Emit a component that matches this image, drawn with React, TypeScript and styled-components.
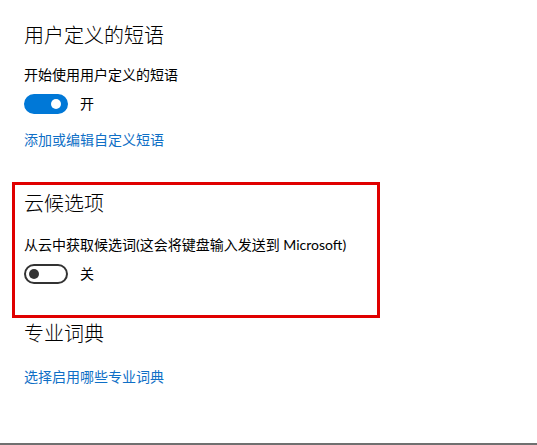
import React from "react";
import styled, { createGlobalStyle } from "styled-components";

const Global = createGlobalStyle`
  html, body { margin: 0; padding: 0; background: #fff; }
  body { font-family: "Lato", "Noto Sans CJK SC", sans-serif; color: #000; }
`;

const Page = styled.div`
  width: 537px;
  height: 445px;
  box-sizing: border-box;
  border-bottom: 2px solid #707070;
  display: flex;
  flex-direction: column;
  overflow: hidden;
`;

const Section = styled.section<{ $top?: number }>`
  display: flex;
  flex-direction: column;
  align-items: flex-start;
  flex-shrink: 0;
  box-sizing: border-box;
  margin-top: ${(p) => p.$top ?? 0}px;
  padding-left: 24px;
`;

const Highlight = styled(Section)`
  margin-left: 12px;
  padding: 4px 0 0 9px;
  width: 368px;
  height: 136px;
  border: 3px solid #e00000;
`;

const Title = styled.h2<{ $top: number }>`
  margin: ${(p) => p.$top}px 0 0 0;
  font-family: "Noto Sans CJK SC", sans-serif;
  font-size: 20px;
  line-height: 28px;
  font-weight: 300;
`;

const Label = styled.div<{ $top: number }>`
  margin-top: ${(p) => p.$top}px;
  font-size: 14px;
  line-height: 20px;
`;

const Link = styled.a<{ $top: number }>`
  margin-top: ${(p) => p.$top}px;
  font-size: 14px;
  line-height: 20px;
  color: #0f6fc6;
  text-decoration: none;
`;

const ToggleRow = styled.div<{ $top: number }>`
  margin-top: ${(p) => p.$top}px;
  display: flex;
  align-items: center;
  gap: 12px;
  font-size: 14px;
  line-height: 20px;
`;

const Track = styled.div<{ $on: boolean }>`
  position: relative;
  width: 44px;
  height: 20px;
  box-sizing: border-box;
  border-radius: 10px;
  border: 2px solid ${(p) => (p.$on ? "#0078d7" : "#333")};
  background: ${(p) => (p.$on ? "#0078d7" : "#fff")};
`;

const Knob = styled.div<{ $on: boolean }>`
  position: absolute;
  top: 3px;
  left: ${(p) => (p.$on ? "25px" : "3px")};
  width: 10px;
  height: 10px;
  border-radius: 50%;
  background: ${(p) => (p.$on ? "#fff" : "#333")};
`;

function Toggle({ on, label, top }: { on: boolean; label: string; top: number }) {
  return (
    <ToggleRow $top={top}>
      <Track $on={on}>
        <Knob $on={on} />
      </Track>
      <span>{label}</span>
    </ToggleRow>
  );
}

export default function App() {
  return (
    <>
      <Global />
      <Page>
        <Section>
          <Title $top={21}>用户定义的短语</Title>
          <Label $top={16}>开始使用用户定义的短语</Label>
          <Toggle on={true} label="开" top={9} />
          <Link $top={16} href="#">添加或编辑自定义短语</Link>
        </Section>
        <Highlight $top={32}>
          <Title $top={0}>云候选项</Title>
          <Label $top={18}>从云中获取候选词(这会将键盘输入发送到 Microsoft)</Label>
          <Toggle on={false} label="关" top={9} />
        </Highlight>
        <Section $top={1}>
          <Title $top={0}>专业词典</Title>
          <Link $top={20} href="#">选择启用哪些专业词典</Link>
        </Section>
      </Page>
    </>
  );
}
